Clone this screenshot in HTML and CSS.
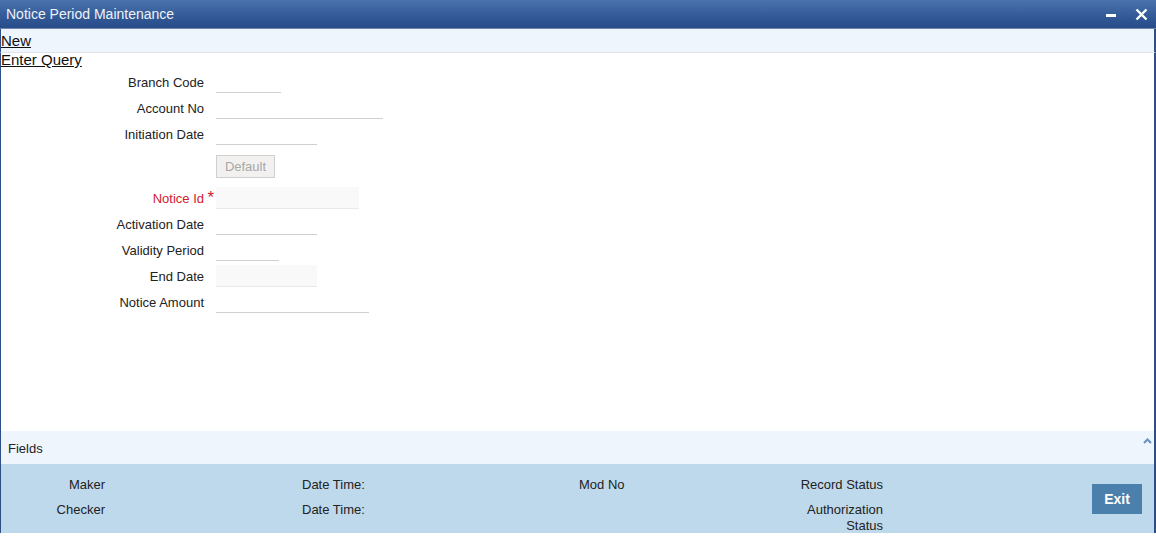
FILE: index.html
```html
<!DOCTYPE html>
<html>
<head>
<meta charset="utf-8">
<link rel="stylesheet" href="styles.css">
</head>
<body>
<div class="window">
  <div class="titlebar">
    <span class="title">Notice Period Maintenance</span>
    <div class="controls">
      <svg class="ctl" width="12" height="12" viewBox="0 0 12 12"><rect x="1" y="6" width="10" height="3" fill="#fff"/></svg>
      <svg class="ctl" width="13" height="13" viewBox="0 0 13 13"><path d="M1.5 1.5 L11.5 11.5 M11.5 1.5 L1.5 11.5" stroke="#fff" stroke-width="2.4" fill="none"/></svg>
    </div>
  </div>
  <div class="toolbar"><a class="tlink">New</a></div>
  <div class="query"><a class="tlink">Enter Query</a></div>
  <div class="form">
    <div class="row"><label class="lbl">Branch Code</label><div class="inp w65"></div></div>
    <div class="row"><label class="lbl">Account No</label><div class="inp w167"></div></div>
    <div class="row"><label class="lbl">Initiation Date</label><div class="inp w101"></div></div>
    <div class="row btnrow"><span class="lbl"></span><button class="dflt">Default</button></div>
    <div class="row"><label class="lbl req">Notice Id<span class="star">*</span></label><div class="inp w143 filled"></div></div>
    <div class="row"><label class="lbl">Activation Date</label><div class="inp w101"></div></div>
    <div class="row"><label class="lbl">Validity Period</label><div class="inp w63"></div></div>
    <div class="row"><label class="lbl">End Date</label><div class="inp w101 filled"></div></div>
    <div class="row"><label class="lbl">Notice Amount</label><div class="inp w153"></div></div>
  </div>
  <div class="fieldsbar">
    <span>Fields</span>
    <svg class="caret" width="9" height="6" viewBox="0 0 9 6"><path d="M1 5 L4.5 1.5 L8 5" stroke="#6b8fc2" stroke-width="2" fill="none"/></svg>
  </div>
  <div class="audit">
    <div class="a-r c1">Maker</div>
    <div class="a-l c3">Date Time:</div>
    <div class="a-l c4">Mod No</div>
    <div class="a-r c5">Record Status</div>
    <div class="a-r c1 r2">Checker</div>
    <div class="a-l c3 r2">Date Time:</div>
    <div class="a-r c5 r2">Authorization<br>Status</div>
    <button class="exit">Exit</button>
  </div>
  <div class="bottom"></div>
</div>
</body>
</html>
```
FILE: styles.css
```css
html, body {
  margin: 0;
  padding: 0;
  background: #ffffff;
}
body {
  font-family: "Liberation Sans", Arial, sans-serif;
  color: #222;
}
.window {
  width: 1156px;
  height: 541px;
  box-sizing: border-box;
  display: flex;
  flex-direction: column;
  background: #fff;
}
.titlebar {
  height: 28px;
  display: flex;
  align-items: center;
  justify-content: space-between;
  background: linear-gradient(#4a73ad, #2f5593 70%, #284c8a);
  border-bottom: 1px solid #6e88ad;
  padding: 0 8px 0 6px;
  flex: none;
}
.title {
  color: #eef2f8;
  font-size: 14px;
}
.controls {
  display: flex;
  align-items: center;
  gap: 18px;
}
.ctl { display: block; }
.toolbar, .query, .form, .fieldsbar, .audit {
  border-left: 1px solid #2d4f86;
  border-right: 2px solid #2d4f86;
}
.toolbar {
  height: 23px;
  background: #eef5fd;
  border-bottom: 1px solid #dfe4ea;
  display: flex;
  align-items: center;
  flex: none;
}
.tlink {
  font-size: 15px;
  color: #111;
  text-decoration: underline;
}
.query {
  height: 15px;
  line-height: 13px;
  flex: none;
}
.form {
  flex: 1;
  padding-top: 1px;
}
.row {
  height: 26px;
  display: flex;
  align-items: center;
}
.lbl {
  width: 203px;
  text-align: right;
  font-size: 13px;
  color: #222;
  margin-right: 12px;
  position: relative;
  flex: none;
}
.req { color: #d2202f; }
.star {
  position: absolute;
  right: -10px;
  top: -2px;
  color: #d2202f;
  font-size: 17px;
  line-height: 17px;
}
.inp {
  border-bottom: 1px solid #cfcfcf;
  box-sizing: border-box;
  height: 22px;
}
.inp.filled {
  background: #f9f9f9;
  border-bottom-color: #e9e9e9;
}
.w63 { width: 63px; }
.w65 { width: 65px; }
.w101 { width: 101px; }
.w143 { width: 143px; }
.w153 { width: 153px; }
.w167 { width: 167px; }
.btnrow { height: 38px; }
.dflt {
  width: 59px;
  height: 23px;
  padding: 0;
  background: #f2f1ef;
  border: 1px solid #cfcfcf;
  color: #a8a8a8;
  font-family: "Liberation Sans", Arial, sans-serif;
  font-size: 13px;
}
.fieldsbar {
  height: 33px;
  background: #eef5fd;
  display: flex;
  align-items: center;
  justify-content: space-between;
  padding: 0 2px 0 7px;
  font-size: 13px;
  color: #222;
  flex: none;
}
.fieldsbar span { margin-top: 1px; }
.caret { align-self: flex-start; margin-top: 7px; }
.audit {
  height: 69px;
  box-sizing: border-box;
  background: #bed9ec;
  padding-top: 13px;
  display: grid;
  grid-template-columns: 104px 197px 277px 204px 100px 1fr;
  grid-template-rows: 16px 41px;
  row-gap: 9px;
  font-size: 13px;
  line-height: 16px;
  color: #222;
  flex: none;
}
.a-r { text-align: right; }
.a-l { text-align: left; }
.c1 { grid-column: 1; grid-row: 1; }
.c3 { grid-column: 3; grid-row: 1; }
.c4 { grid-column: 4; grid-row: 1; }
.c5 { grid-column: 5; grid-row: 1; }
.r2 { grid-row: 2; }
.exit {
  grid-column: 6;
  grid-row: 1 / span 2;
  justify-self: end;
  align-self: start;
  margin-top: 7px;
  margin-right: 12px;
  width: 50px;
  height: 30px;
  background: #4b80ad;
  border: none;
  color: #fff;
  font-family: "Liberation Sans", Arial, sans-serif;
  font-size: 14px;
  font-weight: bold;
  padding: 0;
}
.bottom {
  height: 8px;
  flex: none;
  background: #fff;
}
```
